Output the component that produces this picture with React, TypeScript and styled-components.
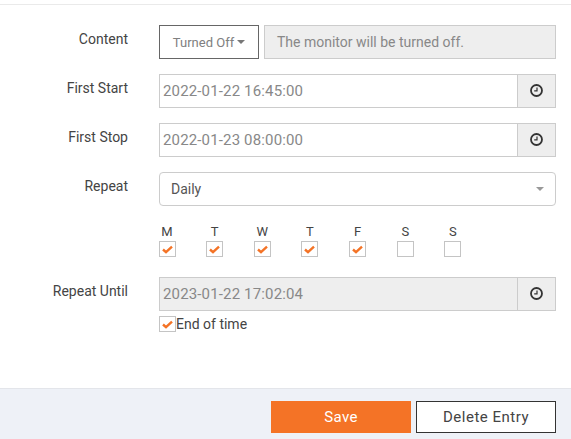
import React from "react";
import styled, { createGlobalStyle } from "styled-components";

const GlobalStyle = createGlobalStyle`
  html, body {
    margin: 0;
    padding: 0;
    background: #fff;
  }
  body {
    font-family: Roboto, "Noto Sans", sans-serif;
    color: #444;
  }
`;

const Page = styled.div`
  width: 571px;
  height: 439px;
  display: flex;
  flex-direction: column;
  overflow: hidden;
`;

const Form = styled.div`
  flex: 1;
  margin-top: 4px;
  border-top: 1px solid #eaeaea;
  padding: 20px 15px 0 0;
  display: flex;
  flex-direction: column;
  gap: 15px;
`;

const Row = styled.div<{ $gap?: number }>`
  display: grid;
  grid-template-columns: 128px 1fr;
  column-gap: 31px;
  margin-top: ${(p) => p.$gap ?? 0}px;
`;

const Label = styled.label`
  text-align: right;
  font-size: 14px;
  line-height: 18px;
  padding-top: 5px;
  color: #444;
`;

const Controls = styled.div`
  display: flex;
  gap: 5px;
`;

const DropButton = styled.button`
  width: 100px;
  height: 34px;
  flex: none;
  border: 1px solid #666;
  background: #fff;
  color: #808080;
  font: 13px Roboto, sans-serif;
  padding: 0;
  display: flex;
  align-items: center;
  justify-content: center;
  gap: 3px;
`;

const Caret = styled.span`
  width: 0;
  height: 0;
  border-left: 4px solid transparent;
  border-right: 4px solid transparent;
  border-top: 4px solid #777;
`;

const Field = styled.div<{ $disabled?: boolean }>`
  flex: 1;
  height: 34px;
  box-sizing: border-box;
  border: 1px solid #ccc;
  background: ${(p) => (p.$disabled ? "#eeeeee" : "#fff")};
  color: #888;
  font-size: 14px;
  line-height: 33px;
  padding-left: 12px;
`;

const DateGroup = styled.div`
  flex: 1;
  display: flex;
`;

const DateField = styled(Field)`
  font-size: 15px;
  letter-spacing: 0.15px;
  padding-left: 3px;
  border-right: none;
`;

const Addon = styled.div`
  width: 39px;
  height: 34px;
  box-sizing: border-box;
  border: 1px solid #ccc;
  background: #eeeeee;
  padding-bottom: 1px;
  display: flex;
  align-items: center;
  justify-content: center;
`;

const Select = styled.div`
  flex: 1;
  height: 34px;
  box-sizing: border-box;
  border: 1px solid #ccc;
  border-radius: 4px;
  color: #555;
  font-size: 14px;
  line-height: 32px;
  padding: 0 11px;
  display: flex;
  align-items: center;
  justify-content: space-between;
`;

const SelectCaret = styled(Caret)`
  border-top-color: #999;
`;

const Days = styled.div`
  display: flex;
  gap: 31.67px;
  margin-top: 3px;
`;

const Day = styled.div`
  width: 16px;
  display: flex;
  flex-direction: column;
  align-items: center;
  gap: 2px;
  font-size: 13px;
  line-height: 15px;
  color: #444;
`;

const CheckBox = styled.span`
  width: 17px;
  height: 16px;
  flex: none;
  box-sizing: border-box;
  border: 1px solid #c4c4c4;
  background: #fff;
  display: flex;
  align-items: center;
  justify-content: center;
`;

const UntilBlock = styled.div`
  flex: 1;
  display: flex;
  flex-direction: column;
  gap: 5px;
`;

const CheckLine = styled.div`
  display: flex;
  align-items: center;
  font-size: 14px;
  line-height: 16px;
  color: #444;
`;

const Footer = styled.div`
  height: 51px;
  flex: none;
  box-sizing: border-box;
  border-top: 1px solid #e3e5ea;
  background: #eef1f7;
  padding: 12px 15px 0 0;
  display: flex;
  justify-content: flex-end;
  gap: 5px;
`;

const SaveButton = styled.button`
  width: 140px;
  height: 32px;
  border: none;
  background: #f47326;
  color: #fff;
  font: 15px Roboto, sans-serif;
  letter-spacing: 0.4px;
`;

const DeleteButton = styled.button`
  width: 140px;
  height: 32px;
  border: 1px solid #333;
  background: #fff;
  color: #444;
  font: 15px Roboto, sans-serif;
  letter-spacing: 0.5px;
`;

const Clock = () => (
  <svg width="15" height="15" viewBox="0 0 15 15" fill="none" stroke="#333">
    <circle cx="7.5" cy="7.5" r="5.5" strokeWidth="1.8" />
    <path d="M8 4.5v3.4H5.2" strokeWidth="1.2" />
  </svg>
);

const Check = () => (
  <svg width="11" height="9" viewBox="0 0 11 9" fill="none">
    <path d="M1 4.5 4 7.2 10 1.6" stroke="#f47326" strokeWidth="2.4" />
  </svg>
);

const days = [
  { name: "M", on: true },
  { name: "T", on: true },
  { name: "W", on: true },
  { name: "T", on: true },
  { name: "F", on: true },
  { name: "S", on: false },
  { name: "S", on: false },
];

const App = () => (
  <Page>
    <GlobalStyle />
    <Form>
      <Row>
        <Label>Content</Label>
        <Controls>
          <DropButton>
            Turned Off
            <Caret />
          </DropButton>
          <Field $disabled>The monitor will be turned off.</Field>
        </Controls>
      </Row>
      <Row>
        <Label>First Start</Label>
        <DateGroup>
          <DateField>2022-01-22 16:45:00</DateField>
          <Addon>
            <Clock />
          </Addon>
        </DateGroup>
      </Row>
      <Row>
        <Label>First Stop</Label>
        <DateGroup>
          <DateField>2022-01-23 08:00:00</DateField>
          <Addon>
            <Clock />
          </Addon>
        </DateGroup>
      </Row>
      <Row>
        <Label>Repeat</Label>
        <Select>
          Daily
          <SelectCaret />
        </Select>
      </Row>
      <Row>
        <span />
        <Days>
          {days.map((d, i) => (
            <Day key={i}>
              {d.name}
              <CheckBox>{d.on && <Check />}</CheckBox>
            </Day>
          ))}
        </Days>
      </Row>
      <Row $gap={5}>
        <Label>Repeat Until</Label>
        <UntilBlock>
          <DateGroup>
            <DateField $disabled>2023-01-22 17:02:04</DateField>
            <Addon>
              <Clock />
            </Addon>
          </DateGroup>
          <CheckLine>
            <CheckBox>
              <Check />
            </CheckBox>
            End of time
          </CheckLine>
        </UntilBlock>
      </Row>
    </Form>
    <Footer>
      <SaveButton>Save</SaveButton>
      <DeleteButton>Delete Entry</DeleteButton>
    </Footer>
  </Page>
);

export default App;
